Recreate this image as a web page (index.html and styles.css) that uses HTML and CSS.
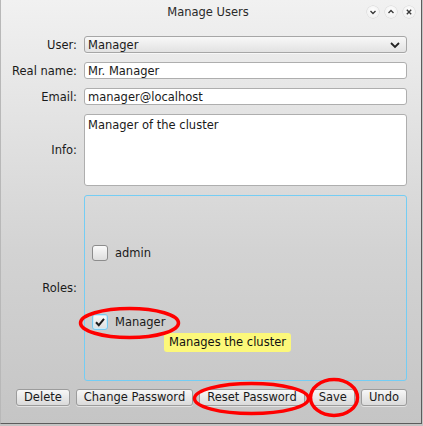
FILE: index.html
```html
<!DOCTYPE html>
<html>
<head>
<meta charset="utf-8">
<link rel="stylesheet" href="styles.css">
</head>
<body>
<div class="window">
  <div class="titlebar">
    <span></span>
    <span class="title">Manage Users</span>
    <div class="wm-buttons">
      <span class="wm-btn"><svg width="12" height="12" viewBox="0 0 12 12"><path d="M3.5 5 L6 7.5 L8.5 5" fill="none" stroke="#3a3a3a" stroke-width="1.4"/></svg></span>
      <span class="wm-btn"><svg width="12" height="12" viewBox="0 0 12 12"><path d="M3.5 7 L6 4.5 L8.5 7" fill="none" stroke="#3a3a3a" stroke-width="1.4"/></svg></span>
      <span class="wm-btn"><svg width="12" height="12" viewBox="0 0 12 12"><path d="M3.8 3.8 L8.2 8.2 M8.2 3.8 L3.8 8.2" fill="none" stroke="#3a3a3a" stroke-width="1.4"/></svg></span>
    </div>
  </div>

  <div class="form">
    <span class="lbl">User:</span>
    <div class="combo"><span>Manager</span><svg width="12" height="10" viewBox="0 0 12 10"><path d="M2 3 L6 7 L10 3" fill="none" stroke="#222" stroke-width="1.8"/></svg></div>

    <span class="lbl">Real name:</span>
    <div class="input">Mr. Manager</div>

    <span class="lbl">Email:</span>
    <div class="input">manager@localhost</div>

    <span class="lbl">Info:</span>
    <div class="textarea">Manager of the cluster</div>

    <span class="lbl">Roles:</span>
    <div class="roles">
      <div class="check-row"><span class="box"></span><span>admin</span></div>
      <div class="check-row"><span class="box focused"><svg width="14" height="14" viewBox="0 0 14 14"><path d="M3 7.2 L5.8 10.2 L11 3.8" fill="none" stroke="#1e1e1e" stroke-width="2"/></svg></span><span>Manager</span></div>
      <div class="tooltip">Manages the cluster</div>
    </div>
  </div>

  <div class="buttons">
    <button class="btn">Delete</button>
    <button class="btn">Change Password</button>
    <button class="btn">Reset Password</button>
    <button class="btn">Save</button>
    <button class="btn">Undo</button>
  </div>

  <svg class="annotations" width="423" height="426" viewBox="0 0 423 426">
    <ellipse cx="129.5" cy="323" rx="49" ry="14.5" fill="none" stroke="#f00" stroke-width="3.5"/>
    <ellipse cx="251.5" cy="398.5" rx="57" ry="15" fill="none" stroke="#f00" stroke-width="3.5"/>
    <ellipse cx="334" cy="397.5" rx="23.5" ry="18" fill="none" stroke="#f00" stroke-width="3.5"/>
  </svg>
</div>
</body>
</html>
```

FILE: styles.css
```css
* { box-sizing: border-box; }
html, body {
  margin: 0;
  padding: 0;
  background: #c4c4c4;
}
body {
  font-family: "DejaVu Sans", "Liberation Sans", sans-serif;
  font-size: 11.5px;
  color: #1a1a1a;
}
.window {
  position: relative;
  width: 422px;
  height: 424px;
  background: linear-gradient(to bottom, #f1f1f1 0px, #e4e4e4 110px, #d3d3d3 250px, #c5c5c5 424px);
  border-left: 1px solid #b8b8b8;
  border-right: 1px solid #5c5c5c;
  border-bottom: 1px solid #5c5c5c;
  display: flex;
  flex-direction: column;
}
.titlebar {
  height: 25px;
  display: grid;
  grid-template-columns: 1fr auto 1fr;
  align-items: center;
  padding: 0 6px 1px 0;
}
.title {
  font-size: 11.5px;
  color: #2a2a2a;
}
.wm-buttons {
  justify-self: end;
  display: flex;
  gap: 6px;
}
.wm-btn {
  width: 12px;
  height: 12px;
  border-radius: 50%;
  background: radial-gradient(circle at 50% 40%, #ffffff, #ececec);
  box-shadow: 0 0 0 0.5px #d0d0d0;
  display: flex;
}
.form {
  display: grid;
  grid-template-columns: 76px 1fr;
  grid-template-rows: 17px 17px 17px 72px 186px;
  column-gap: 7px;
  row-gap: 9px;
  padding: 11px 14px 0 0;
}
.lbl {
  justify-self: end;
  align-self: center;
  white-space: nowrap;
}
.combo {
  display: flex;
  align-items: center;
  justify-content: space-between;
  padding: 0 5px 0 3px;
  border: 1px solid #a6a6a6;
  border-radius: 3px;
  background: linear-gradient(to bottom, #f8f8f8, #e2e2e2);
  box-shadow: 0 1px 0 rgba(255,255,255,0.6);
}
.input {
  display: flex;
  align-items: center;
  padding: 0 3px;
  background: #fff;
  border: 1px solid #aeaeae;
  border-radius: 3px;
}
.textarea {
  padding: 3px 3px;
  background: #fff;
  border: 1px solid #aeaeae;
  border-radius: 3px;
}
.roles {
  position: relative;
  border: 1px solid #74cdf4;
  border-radius: 3px;
  display: flex;
  flex-direction: column;
  padding: 49px 0 0 7px;
  gap: 53px;
}
.check-row {
  display: flex;
  align-items: center;
  gap: 7px;
  height: 16px;
}
.box {
  width: 16px;
  height: 16px;
  border: 1px solid #8c8c8c;
  border-radius: 3px;
  background: linear-gradient(to bottom, #fafafa, #dedede);
  display: flex;
  align-items: center;
  justify-content: center;
}
.box.focused {
  border-color: #79c8ee;
  box-shadow: inset 0 0 0 1px #c8ecfb;
}
.tooltip {
  position: absolute;
  left: 79px;
  top: 137px;
  padding: 2px 5px 3px 5px;
  background: #fcf87a;
  border-radius: 3px;
  color: #111;
  white-space: nowrap;
}
.buttons {
  display: flex;
  justify-content: space-between;
  padding: 8px 14px 0 15px;
}
.btn {
  font-family: inherit;
  font-size: 11.5px;
  color: #1a1a1a;
  height: 17px;
  padding: 0 7px;
  line-height: 15px;
  border: 1px solid #9c9c9c;
  border-radius: 3px;
  background: linear-gradient(to bottom, #f7f7f7, #dadada);
  box-shadow: 0 1px 0 rgba(255,255,255,0.5);
}
.annotations {
  position: absolute;
  left: -1px;
  top: 0;
  pointer-events: none;
}
```
